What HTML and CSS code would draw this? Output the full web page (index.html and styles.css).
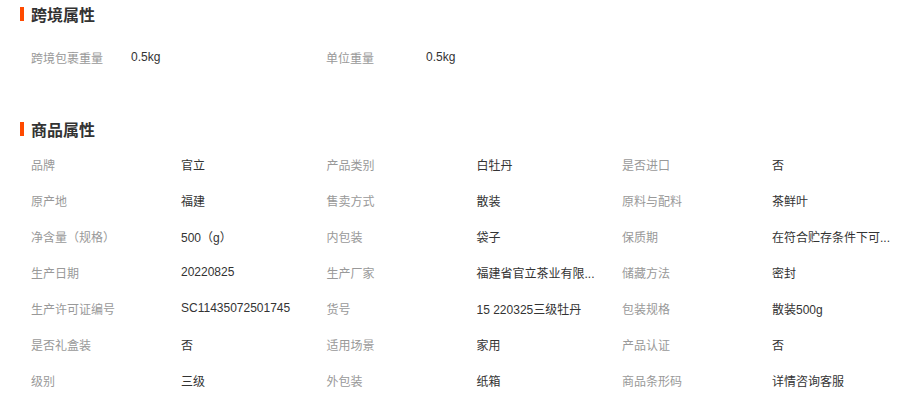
FILE: index.html
```html
<!DOCTYPE html>
<html lang="zh-CN">
<head>
<meta charset="utf-8">
<link rel="stylesheet" href="styles.css">
</head>
<body>
<div class="page">
  <section class="section">
    <h2 class="title">跨境属性</h2>
    <div class="cross-grid">
      <div class="pair"><span class="label">跨境包裹重量</span><span class="value">0.5kg</span></div>
      <div class="pair"><span class="label">单位重量</span><span class="value">0.5kg</span></div>
    </div>
  </section>
  <section class="section section-goods">
    <h2 class="title">商品属性</h2>
    <div class="attr-grid">
      <div class="pair"><span class="label">品牌</span><span class="value">官立</span></div>
      <div class="pair"><span class="label">产品类别</span><span class="value">白牡丹</span></div>
      <div class="pair"><span class="label">是否进口</span><span class="value">否</span></div>

      <div class="pair"><span class="label">原产地</span><span class="value">福建</span></div>
      <div class="pair"><span class="label">售卖方式</span><span class="value">散装</span></div>
      <div class="pair"><span class="label">原料与配料</span><span class="value">茶鲜叶</span></div>

      <div class="pair"><span class="label">净含量（规格）</span><span class="value">500（g）</span></div>
      <div class="pair"><span class="label">内包装</span><span class="value">袋子</span></div>
      <div class="pair"><span class="label">保质期</span><span class="value" title="在符合贮存条件下可长期保存">在符合贮存条件下可...</span></div>

      <div class="pair"><span class="label">生产日期</span><span class="value">20220825</span></div>
      <div class="pair"><span class="label">生产厂家</span><span class="value" title="福建省官立茶业有限公司">福建省官立茶业有限...</span></div>
      <div class="pair"><span class="label">储藏方法</span><span class="value">密封</span></div>

      <div class="pair"><span class="label">生产许可证编号</span><span class="value">SC11435072501745</span></div>
      <div class="pair"><span class="label">货号</span><span class="value">15 220325三级牡丹</span></div>
      <div class="pair"><span class="label">包装规格</span><span class="value">散装500g</span></div>

      <div class="pair"><span class="label">是否礼盒装</span><span class="value">否</span></div>
      <div class="pair"><span class="label">适用场景</span><span class="value">家用</span></div>
      <div class="pair"><span class="label">产品认证</span><span class="value">否</span></div>

      <div class="pair"><span class="label">级别</span><span class="value">三级</span></div>
      <div class="pair"><span class="label">外包装</span><span class="value">纸箱</span></div>
      <div class="pair"><span class="label">商品条形码</span><span class="value">详情咨询客服</span></div>
    </div>
  </section>
</div>
</body>
</html>
```

FILE: styles.css
```css
* { box-sizing: border-box; }
html, body { margin: 0; padding: 0; background: #fff; }
body {
  font-family: "Liberation Sans", "Noto Sans CJK SC", sans-serif;
  font-size: 12px;
  color: #333;
}
.page { padding-left: 20px; }
.title {
  margin: 0;
  height: 28px;
  display: flex;
  align-items: center;
  font-size: 16px;
  font-weight: bold;
  color: #333;
}
.title::before {
  content: "";
  width: 4px;
  height: 14px;
  background: #ff4a00;
  margin-right: 7px;
}
.cross-grid {
  display: grid;
  grid-template-columns: 295px 295px;
  padding-left: 11px;
  margin-top: 11px;
}
.cross-grid .pair { display: flex; align-items: center; height: 36px; }
.cross-grid .label { width: 100px; }
.section-goods { margin-top: 40px; }
.attr-grid {
  display: grid;
  grid-template-columns: 295.5px 295.5px 295.5px;
  padding-left: 11px;
  margin-top: 3px;
}
.attr-grid .pair { display: flex; align-items: center; height: 36px; }
.attr-grid .label { width: 150px; }
.label { color: #999; flex: none; }
.value {
  color: #333;
  white-space: nowrap;
}
```
